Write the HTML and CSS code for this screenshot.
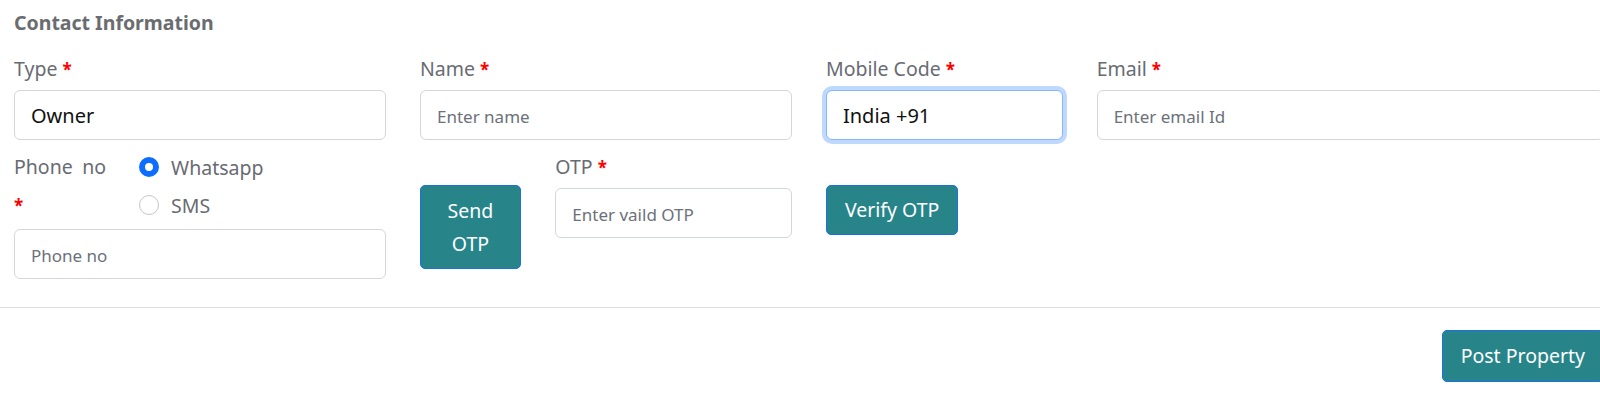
FILE: index.html
```html
<!DOCTYPE html>
<html lang="en">
<head>
<meta charset="utf-8">
<title>Contact Information</title>
<link rel="stylesheet" href="styles.css">
</head>
<body>
<div class="page">
  <h2 class="section-title">Contact Information</h2>
  <div class="grid row-one">
    <div class="field span-3">
      <label class="label">Type <span class="req">*</span></label>
      <input class="control" type="text" value="Owner">
    </div>
    <div class="field span-3">
      <label class="label">Name <span class="req">*</span></label>
      <input class="control" type="text" placeholder="Enter name">
    </div>
    <div class="field span-2">
      <label class="label">Mobile Code <span class="req">*</span></label>
      <input class="control focused" type="text" value="India +91">
    </div>
    <div class="field span-4">
      <label class="label">Email <span class="req">*</span></label>
      <input class="control" type="text" placeholder="Enter email Id">
    </div>
  </div>
  <div class="grid row-two">
    <div class="field span-3">
      <div class="phone-head">
        <label class="phone-label">Phone no <span class="req">*</span></label>
        <div class="radios">
          <div class="radio-row"><span class="radio checked"></span><span>Whatsapp</span></div>
          <div class="radio-row"><span class="radio"></span><span>SMS</span></div>
        </div>
      </div>
      <input class="control phone-input" type="text" placeholder="Phone no">
    </div>
    <div class="span-1 btn-cell">
      <button class="btn btn-send">Send OTP</button>
    </div>
    <div class="field span-2">
      <label class="label">OTP <span class="req">*</span></label>
      <input class="control" type="text" placeholder="Enter vaild OTP">
    </div>
    <div class="span-2 btn-cell">
      <button class="btn">Verify OTP</button>
    </div>
  </div>
</div>
<hr class="divider">
<div class="footer">
  <button class="btn btn-post">Post Property</button>
</div>
</body>
</html>
```
FILE: styles.css
```css
html, body {
  margin: 0;
  padding: 0;
  background: #ffffff;
  overflow: hidden;
  font-family: "Noto Sans", "Open Sans", sans-serif;
}

.page {
  padding: 11px 0 0 14px;
}

.section-title {
  margin: 0 0 15px;
  font-size: 19.5px;
  line-height: 24px;
  font-weight: 700;
  color: #6a6c70;
}

.grid {
  display: grid;
  grid-template-columns: repeat(12, 101.333px);
  column-gap: 34px;
  width: 1590px;
}

.row-two {
  margin-top: 8px;
}

.span-1 { grid-column: span 1; }
.span-2 { grid-column: span 2; }
.span-3 { grid-column: span 3; }
.span-4 { grid-column: span 4; }

.field {
  display: flex;
  flex-direction: column;
}

.label {
  display: block;
  font-size: 19.5px;
  line-height: 38px;
  margin-bottom: 1px;
  color: #686b72;
}

.req {
  color: #ff0000;
  font-size: 17px;
  font-weight: 700;
}

.control {
  box-sizing: border-box;
  height: 50px;
  width: 100%;
  margin: 0;
  padding: 0 16px;
  border: 1px solid #d3d6db;
  border-radius: 6px;
  font-family: "Noto Sans", "Open Sans", sans-serif;
  font-size: 20px;
  color: #111111;
  background: #ffffff;
  outline: none;
}

.control::placeholder {
  font-size: 17px;
  color: #6c717a;
}

.control.focused {
  border-color: #86b7fe;
  box-shadow: 0 0 0 4px rgba(13, 110, 253, 0.27);
}

.phone-head {
  display: flex;
  gap: 33px;
}

.phone-label {
  width: 92px;
  font-size: 19.5px;
  line-height: 38px;
  color: #686b72;
  text-align: justify;
}

.radios {
  display: flex;
  flex-direction: column;
}

.radio-row {
  display: flex;
  align-items: center;
  gap: 12px;
  height: 38px;
  font-size: 19.5px;
  color: #686b72;
}

.radio {
  box-sizing: border-box;
  width: 20px;
  height: 20px;
  border-radius: 50%;
  border: 1px solid #c4c6c9;
  background: #ffffff;
}

.radio.checked {
  border: 6px solid #0d6efd;
  background: #ffffff;
}

.phone-input {
  margin-top: 4px;
}

.btn-cell {
  padding-top: 37px;
  display: flex;
  align-items: flex-start;
}

.btn {
  box-sizing: border-box;
  margin: 0;
  padding: 8px 18px;
  border: 1px solid #1d6fe6;
  border-radius: 5px;
  background: #27858a;
  color: #ffffff;
  font-family: "Noto Sans", "Open Sans", sans-serif;
  font-size: 19.5px;
  line-height: 32px;
  text-align: center;
}

.btn-cell .btn {
  max-width: 100%;
}

.btn-send {
  width: 101px;
  line-height: 33px;
}

.btn-post {
  padding: 9px 18px;
}

.divider {
  margin: 28px 0 0;
  border: 0;
  border-top: 1px solid #dcdee2;
  height: 0;
}

.footer {
  display: flex;
  justify-content: flex-end;
  width: 1590px;
  margin: 22px 0 0 14px;
}
```
